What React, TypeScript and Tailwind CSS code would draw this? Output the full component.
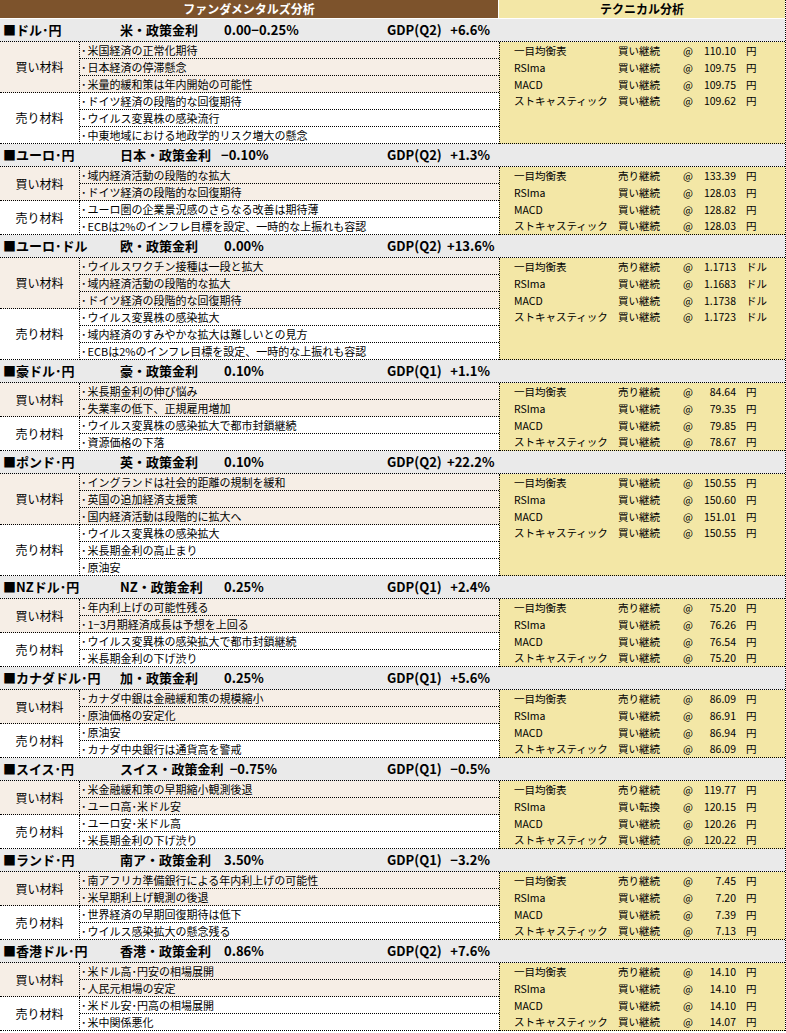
import React from "react"

type Pair = {
  name: string
  policy: string
  rate: string
  labelW: string
  gdpQ: string
  gdp: string
  buy: string[]
  sell: string[]
  unit: string
  tech: [string, string][]
}

const techNames = ["一目均衡表", "RSIma", "MACD", "ストキャスティック"]

const pairs: Pair[] = [
  {
    name: "■ドル･円",
    policy: "米・政策金利",
    rate: "0.00−0.25%",
    labelW: "w-[104px]",
    gdpQ: "GDP(Q2)",
    gdp: "+6.6%",
    buy: ["米国経済の正常化期待", "日本経済の停滞懸念", "米量的緩和策は年内開始の可能性"],
    sell: ["ドイツ経済の段階的な回復期待", "ウイルス変異株の感染流行", "中東地域における地政学的リスク増大の懸念"],
    unit: "円",
    tech: [["買い継続", "110.10"], ["買い継続", "109.75"], ["買い継続", "109.75"], ["買い継続", "109.62"]],
  },
  {
    name: "■ユーロ･円",
    policy: "日本・政策金利",
    rate: "−0.10%",
    labelW: "min-w-[84px] pr-[10px]",
    gdpQ: "GDP(Q2)",
    gdp: "+1.3%",
    buy: ["域内経済活動の段階的な拡大", "ドイツ経済の段階的な回復期待"],
    sell: ["ユーロ圏の企業景況感のさらなる改善は期待薄", "ECBは2%のインフレ目標を設定、一時的な上振れも容認"],
    unit: "円",
    tech: [["売り継続", "133.39"], ["買い継続", "128.03"], ["買い継続", "128.82"], ["買い継続", "128.03"]],
  },
  {
    name: "■ユーロ･ドル",
    policy: "欧・政策金利",
    rate: "0.00%",
    labelW: "w-[104px]",
    gdpQ: "GDP(Q2)",
    gdp: "+13.6%",
    buy: ["ウイルスワクチン接種は一段と拡大", "域内経済活動の段階的な拡大", "ドイツ経済の段階的な回復期待"],
    sell: ["ウイルス変異株の感染拡大", "域内経済のすみやかな拡大は難しいとの見方", "ECBは2%のインフレ目標を設定、一時的な上振れも容認"],
    unit: "ドル",
    tech: [["売り継続", "1.1713"], ["買い継続", "1.1683"], ["買い継続", "1.1738"], ["買い継続", "1.1723"]],
  },
  {
    name: "■豪ドル･円",
    policy: "豪・政策金利",
    rate: "0.10%",
    labelW: "w-[104px]",
    gdpQ: "GDP(Q1)",
    gdp: "+1.1%",
    buy: ["米長期金利の伸び悩み", "失業率の低下、正規雇用増加"],
    sell: ["ウイルス変異株の感染拡大で都市封鎖継続", "資源価格の下落"],
    unit: "円",
    tech: [["売り継続", "84.64"], ["買い継続", "79.35"], ["買い継続", "79.85"], ["買い継続", "78.67"]],
  },
  {
    name: "■ポンド･円",
    policy: "英・政策金利",
    rate: "0.10%",
    labelW: "w-[104px]",
    gdpQ: "GDP(Q2)",
    gdp: "+22.2%",
    buy: ["イングランドは社会的距離の規制を緩和", "英国の追加経済支援策", "国内経済活動は段階的に拡大へ"],
    sell: ["ウイルス変異株の感染拡大", "米長期金利の高止まり", "原油安"],
    unit: "円",
    tech: [["買い継続", "150.55"], ["買い継続", "150.60"], ["買い継続", "151.01"], ["買い継続", "150.55"]],
  },
  {
    name: "■NZドル･円",
    policy: "NZ・政策金利",
    rate: "0.25%",
    labelW: "w-[104px]",
    gdpQ: "GDP(Q1)",
    gdp: "+2.4%",
    buy: ["年内利上げの可能性残る", "1−3月期経済成長は予想を上回る"],
    sell: ["ウイルス変異株の感染拡大で都市封鎖継続", "米長期金利の下げ渋り"],
    unit: "円",
    tech: [["売り継続", "75.20"], ["買い継続", "76.26"], ["買い継続", "76.54"], ["買い継続", "75.20"]],
  },
  {
    name: "■カナダドル･円",
    policy: "加・政策金利",
    rate: "0.25%",
    labelW: "w-[104px]",
    gdpQ: "GDP(Q1)",
    gdp: "+5.6%",
    buy: ["カナダ中銀は金融緩和策の規模縮小", "原油価格の安定化"],
    sell: ["原油安", "カナダ中央銀行は通貨高を警戒"],
    unit: "円",
    tech: [["売り継続", "86.09"], ["買い継続", "86.91"], ["買い継続", "86.94"], ["買い継続", "86.09"]],
  },
  {
    name: "■スイス･円",
    policy: "スイス・政策金利",
    rate: "−0.75%",
    labelW: "min-w-[84px] pr-[6px]",
    gdpQ: "GDP(Q1)",
    gdp: "−0.5%",
    buy: ["米金融緩和策の早期縮小観測後退", "ユーロ高･米ドル安"],
    sell: ["ユーロ安･米ドル高", "米長期金利の下げ渋り"],
    unit: "円",
    tech: [["売り継続", "119.77"], ["買い転換", "120.15"], ["買い継続", "120.26"], ["買い継続", "120.22"]],
  },
  {
    name: "■ランド･円",
    policy: "南ア・政策金利",
    rate: "3.50%",
    labelW: "w-[104px]",
    gdpQ: "GDP(Q1)",
    gdp: "−3.2%",
    buy: ["南アフリカ準備銀行による年内利上げの可能性", "米早期利上げ観測の後退"],
    sell: ["世界経済の早期回復期待は低下", "ウイルス感染拡大の懸念残る"],
    unit: "円",
    tech: [["売り継続", "7.45"], ["買い継続", "7.20"], ["買い継続", "7.39"], ["買い継続", "7.13"]],
  },
  {
    name: "■香港ドル･円",
    policy: "香港・政策金利",
    rate: "0.86%",
    labelW: "w-[104px]",
    gdpQ: "GDP(Q2)",
    gdp: "+7.6%",
    buy: ["米ドル高･円安の相場展開", "人民元相場の安定"],
    sell: ["米ドル安･円高の相場展開", "米中関係悪化"],
    unit: "円",
    tech: [["売り継続", "14.10"], ["買い継続", "14.10"], ["買い継続", "14.10"], ["買い継続", "14.07"]],
  },
]

function Group({ label, items, beige }: { label: string; items: string[]; beige: boolean }) {
  return (
    <div className={`flex ${beige ? "bg-[#f6eee6]" : "bg-white"}`}>
      <div className="w-[80px] shrink-0 flex items-center justify-center border-r border-b border-dotted border-black text-[12px]">
        {label}
      </div>
      <div className="flex-1 min-w-0">
        {items.map((t, i) => (
          <div
            key={i}
            className="h-[17px] border-b border-dotted border-black pl-[1px] text-[11px] leading-[16px] whitespace-nowrap overflow-hidden"
          >
            <span className="mr-[1px]">･</span>
            {t}
          </div>
        ))}
      </div>
    </div>
  )
}

function Section({ p }: { p: Pair }) {
  return (
    <div>
      <div className="h-[23px] bg-[#eaeaea] border-b border-dotted border-black flex items-center pl-[3px] font-bold text-[13px] whitespace-nowrap">
        <div className="w-[384px] shrink-0 flex">
          <span className="w-[117px] shrink-0">{p.name}</span>
          <span className={`shrink-0 ${p.labelW}`}>{p.policy}</span>
          <span>{p.rate}</span>
        </div>
        <span className="w-[60px] shrink-0">{p.gdpQ}</span>
        <span className="w-[43px] shrink-0 text-right">{p.gdp}</span>
      </div>
      <div className="flex">
        <div className="w-[499px] shrink-0">
          <Group label="買い材料" items={p.buy} beige />
          <Group label="売り材料" items={p.sell} beige={false} />
        </div>
        <div className="flex-1 bg-[#f3e7a6] border-l border-b border-dotted border-black pl-[14px]">
          {p.tech.map(([sig, price], i) => (
            <div
              key={i}
              className={`${i === 3 ? "h-[16px]" : "h-[17px]"} flex items-center text-[10.5px] leading-[16px] whitespace-nowrap`}
            >
              <span className="w-[104px] shrink-0">{techNames[i]}</span>
              <span className="w-[65px] shrink-0">{sig}</span>
              <span className="w-[13px] shrink-0">@</span>
              <span className="w-[40px] shrink-0 text-right">{price}</span>
              <span className="ml-[10px]">{p.unit}</span>
            </div>
          ))}
        </div>
      </div>
    </div>
  )
}

export default function App() {
  return (
    <div className="w-[786px] bg-white text-black font-['Noto_Sans_CJK_JP',sans-serif]">
      <div className="border-r border-dotted border-black">
        <div className="flex h-[19px] border-b border-white">
          <div className="w-[498px] bg-[#7d532c] text-white font-bold text-[12px] leading-[18px] text-center">
            ファンダメンタルズ分析
          </div>
          <div className="flex-1 ml-px bg-[#f3e7a6] font-bold text-[12px] leading-[18px] text-center">
            テクニカル分析
          </div>
        </div>
        {pairs.map((p, i) => (
          <Section key={i} p={p} />
        ))}
      </div>
    </div>
  )
}
